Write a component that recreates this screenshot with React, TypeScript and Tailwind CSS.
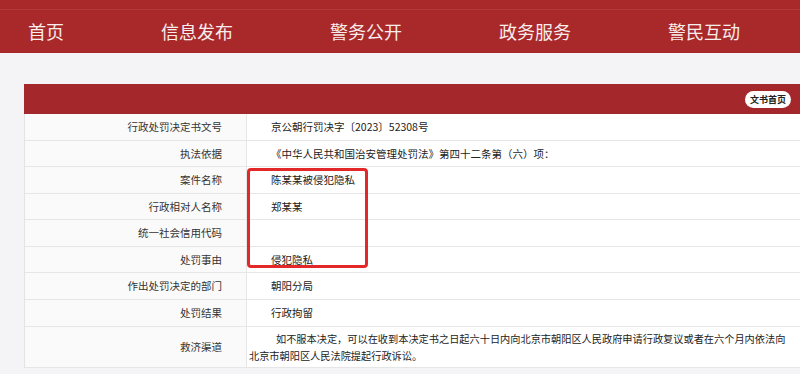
const navItems = ["首页", "信息发布", "警务公开", "政务服务", "警民互动"];

const rows: { label: string; value: string; h: string }[] = [
  { label: "行政处罚决定书文号", value: "京公朝行罚决字〔2023〕52308号", h: "h-[27px]" },
  { label: "执法依据", value: "《中华人民共和国治安管理处罚法》第四十二条第（六）项：", h: "h-[26px]" },
  { label: "案件名称", value: "陈某某被侵犯隐私", h: "h-[27px]" },
  { label: "行政相对人名称", value: "郑某某", h: "h-[26px]" },
  { label: "统一社会信用代码", value: "", h: "h-[27px]" },
  { label: "处罚事由", value: "侵犯隐私", h: "h-[26px]" },
  { label: "作出处罚决定的部门", value: "朝阳分局", h: "h-[27px]" },
  { label: "处罚结果", value: "行政拘留", h: "h-[27px]" },
];

export default function App() {
  return (
    <div className="w-[800px] h-[374px] overflow-hidden bg-[#f4f4f6] font-['Noto_Sans_CJK_SC',sans-serif]">
      {/* top nav */}
      <nav className="h-[53px] bg-[#a9292b] flex flex-col">
        <div className="h-[10px] border-b border-[#b43a3a]" />
        <div className="flex-1 flex items-center gap-[97px] pl-[28px] text-[18px] text-[#f8eded] leading-none pb-[2px]">
          {navItems.map((item) => (
            <span key={item}>{item}</span>
          ))}
        </div>
      </nav>

      {/* card */}
      <div className="pt-[31px] pl-[24px]">
        <div className="relative w-[776px] bg-white">
          <div className="h-[30px] bg-[#a4272b] flex items-center justify-end pr-[9px]">
            <span className="h-[17px] px-[5px] rounded-full bg-white text-[#222] text-[9px] font-bold flex items-center leading-none">
              文书首页
            </span>
          </div>

          <div className="border-l border-[#e4e4e4] text-[10.5px] text-[#333]">
            {rows.map((r) => (
              <div key={r.label} className={`grid grid-cols-[222px_1fr] border-b border-[#e6e6e6] ${r.h}`}>
                <div className="bg-[#fafafa] border-r border-[#e6e6e6] flex items-center justify-end pr-[24px]">
                  {r.label}
                </div>
                <div className="flex items-center pl-[24px] text-[#222]">{r.value}</div>
              </div>
            ))}
            <div className="grid grid-cols-[222px_1fr] border-b border-[#e6e6e6] h-[41px]">
              <div className="bg-[#fafafa] border-r border-[#e6e6e6] flex items-center justify-end pr-[24px]">
                救济渠道
              </div>
              <div className="flex flex-col justify-center pl-[2px] leading-[17px] text-[10.2px] text-[#222] whitespace-nowrap">
                <span className="pl-[27px]">
                  如不服本决定，可以在收到本决定书之日起六十日内向北京市朝阳区人民政府申请行政复议或者在六个月内依法向
                </span>
                <span>北京市朝阳区人民法院提起行政诉讼。</span>
              </div>
            </div>
          </div>

          {/* highlight box */}
          <div className="absolute left-[223px] top-[84px] w-[121px] h-[100px] border-[3px] border-[#e3282a] rounded-[4px]" />
        </div>
      </div>
    </div>
  );
}
